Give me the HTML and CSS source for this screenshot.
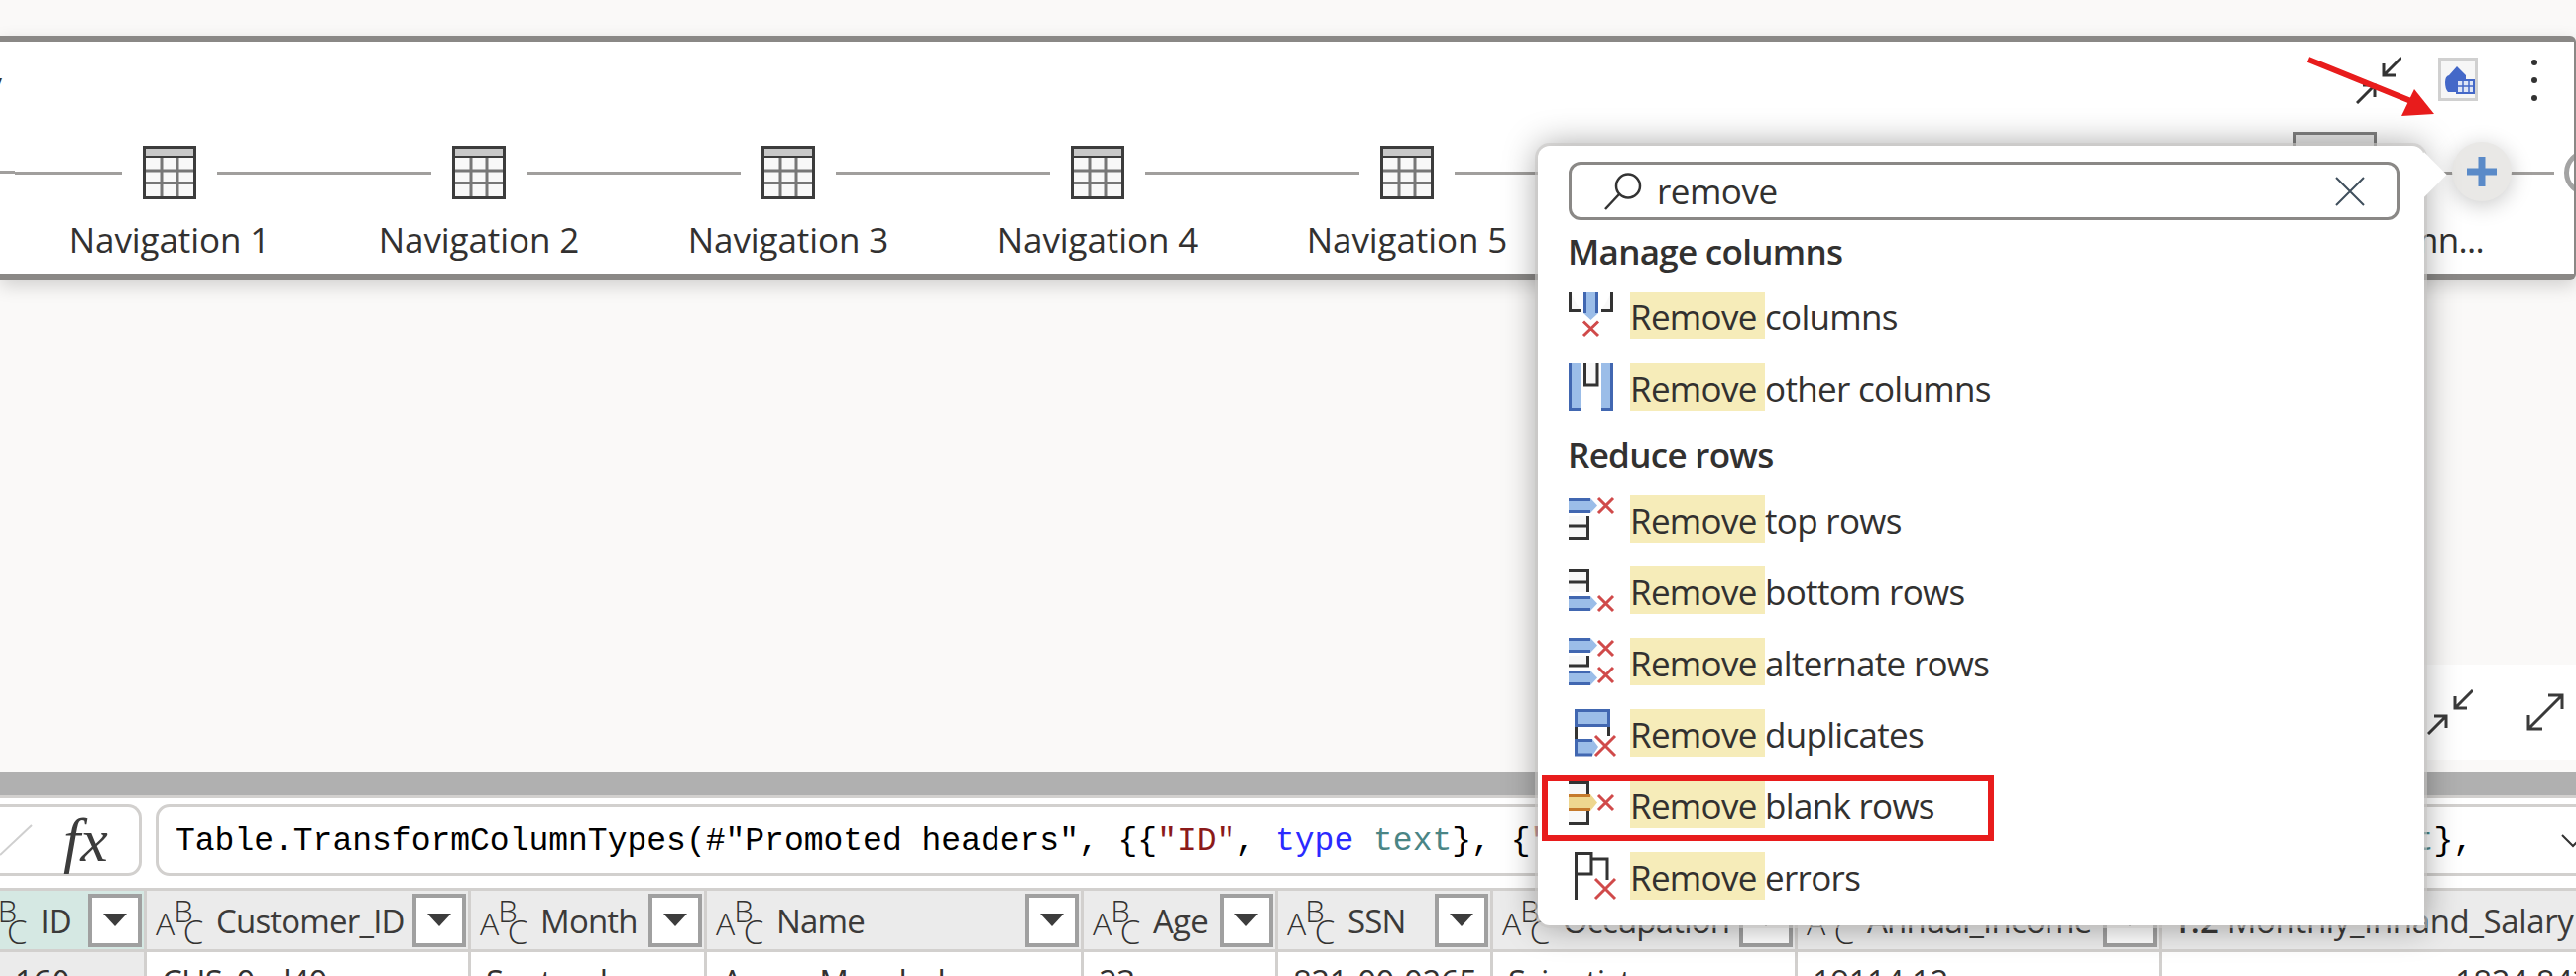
FILE: index.html
```html
<!DOCTYPE html>
<html lang="en">
<head>
    <meta charset="UTF-8">
    <title>Power Query - Add step</title>
    <link rel="stylesheet" href="styles.css">
</head>
<body>
    <div class="top-gap"></div>

    <section class="diagram">
        <div class="diagram-head">
            <div class="diagram-title">Query</div>
            <div class="diagram-tools">
                <svg class="tool-collapse" width="46" height="48" viewBox="0 0 46 48" fill="none" stroke="#333" stroke-width="3">
                    <path d="M46 1 L28 19 M28 7 V19 H40 M1 47 L19 29 M7 29 H19 V41"/>
                </svg>
                <svg class="tool-home" width="40" height="46" viewBox="0 0 40 46">
                    <rect x="1.5" y="2.5" width="37" height="41" fill="#f6f6f6" stroke="#d0d0d0" stroke-width="3"/>
                    <path d="M7 26 Q7 20 11 19 L19 10 L28 19 V36 H10 Q7 33 7 26 Z" fill="#4468c8"/>
                    <rect x="19" y="24" width="17" height="13" fill="#dfe6f6" stroke="#4468c8" stroke-width="2"/>
                    <path d="M19 30 H36 M25 24 V37 M31 24 V37" stroke="#4468c8" stroke-width="1.5"/>
                </svg>
                <div class="tool-dots"><span></span><span></span><span></span></div>
            </div>
        </div>

        <div class="steps">
            <div class="step-lead"></div>
            <div class="step">
                <div class="step-row"><i></i><svg class="table-icon" viewBox="0 0 54 54"><use href="#table"/></svg><i></i></div>
                <div class="step-label">Navigation 1</div>
            </div>
            <div class="step">
                <div class="step-row"><i></i><svg class="table-icon" viewBox="0 0 54 54"><use href="#table"/></svg><i></i></div>
                <div class="step-label">Navigation 2</div>
            </div>
            <div class="step">
                <div class="step-row"><i></i><svg class="table-icon" viewBox="0 0 54 54"><use href="#table"/></svg><i></i></div>
                <div class="step-label">Navigation 3</div>
            </div>
            <div class="step">
                <div class="step-row"><i></i><svg class="table-icon" viewBox="0 0 54 54"><use href="#table"/></svg><i></i></div>
                <div class="step-label">Navigation 4</div>
            </div>
            <div class="step">
                <div class="step-row"><i></i><svg class="table-icon" viewBox="0 0 54 54"><use href="#table"/></svg><i></i></div>
                <div class="step-label">Navigation 5</div>
            </div>
            <div class="step">
                <div class="step-row"><i></i><svg class="table-icon" viewBox="0 0 54 54"><use href="#table"/></svg><i></i></div>
                <div class="step-label">Navigation 6</div>
            </div>
            <div class="step">
                <div class="step-row"><i></i><svg class="table-icon" viewBox="0 0 54 54"><use href="#table"/></svg><i></i></div>
                <div class="step-label">Navigation 7</div>
            </div>
            <div class="step">
                <div class="step-row"><i></i><div class="step-selected"></div><i></i></div>
                <div class="step-label step-label-long">Removed column...</div>
            </div>
            <div class="step-tail">
                <div class="step-row"><i></i><div class="step-ring"></div></div>
            </div>
        </div>

        <div class="add-step">
            <svg width="30" height="30" viewBox="0 0 30 30"><path d="M15 0 V30 M0 15 H30" stroke="#5a8ac8" stroke-width="7"/></svg>
        </div>
    </section>

    <div class="canvas">
        <div class="zoom-panel">
            <svg class="zoom-collapse" width="46" height="46" viewBox="0 0 46 46" fill="none" stroke="#3a3a3a" stroke-width="3">
                <path d="M46 1 L28 19 M28 7 V19 H40 M1 45 L19 27 M7 27 H19 V39"/>
            </svg>
            <svg class="zoom-expand" width="38" height="38" viewBox="0 0 38 38" fill="none" stroke="#3a3a3a" stroke-width="3">
                <path d="M2 36 L36 2 M22 2 H36 V16 M2 22 V36 H16"/>
            </svg>
        </div>
    </div>

    <div class="splitter"></div>

    <div class="formula-bar">
        <div class="fx-box">
            <svg width="34" height="32" viewBox="0 0 34 32"><path d="M0 31 L32 1" stroke="#cfcfcf" stroke-width="2"/></svg>
            <span class="fx">fx</span>
        </div>
        <div class="formula-box">
            <div class="formula-text">Table.TransformColumnTypes(#"Promoted headers", {{<span class="str">"ID"</span>, <span class="kw">type</span> <span class="ty">text</span>}, {<span class="str">"Customer_ID"</span>, <span class="kw">type</span> <span class="ty">text</span>}, {<span class="str">"Month"</span>, <span class="kw">type</span> <span class="ty">text</span>},</div>
            <svg class="formula-chevron" width="24" height="14" viewBox="0 0 24 14"><path d="M1 1 L12 12 L23 1" fill="none" stroke="#333" stroke-width="2"/></svg>
        </div>
    </div>

    <div class="grid">
        <div class="grid-head">
            <div class="col col-id head-cell active">
                <span class="abc">A<b>B</b><em>C</em></span><span class="col-name">ID</span>
                <span class="filter"></span>
            </div>
            <div class="col col-customer head-cell">
                <span class="abc">A<b>B</b><em>C</em></span><span class="col-name">Customer_ID</span>
                <span class="filter"></span>
            </div>
            <div class="col col-month head-cell">
                <span class="abc">A<b>B</b><em>C</em></span><span class="col-name">Month</span>
                <span class="filter"></span>
            </div>
            <div class="col col-name-w head-cell">
                <span class="abc">A<b>B</b><em>C</em></span><span class="col-name">Name</span>
                <span class="filter"></span>
            </div>
            <div class="col col-age head-cell">
                <span class="abc">A<b>B</b><em>C</em></span><span class="col-name">Age</span>
                <span class="filter"></span>
            </div>
            <div class="col col-ssn head-cell">
                <span class="abc">A<b>B</b><em>C</em></span><span class="col-name">SSN</span>
                <span class="filter"></span>
            </div>
            <div class="col col-job head-cell">
                <span class="abc">A<b>B</b><em>C</em></span><span class="col-name">Occupation</span>
                <span class="filter"></span>
            </div>
            <div class="col col-income head-cell">
                <span class="abc">A<b>B</b><em>C</em></span><span class="col-name">Annual_Income</span>
                <span class="filter"></span>
            </div>
            <div class="col col-salary head-cell">
                <span class="num-type">1.2</span><span class="col-name col-name-wide">Monthly_Inhand_Salary</span>
            </div>
        </div>
        <div class="grid-row">
            <div class="col col-id cell row-head">160</div>
            <div class="col col-customer cell">CUS_0xd40</div>
            <div class="col col-month cell">September</div>
            <div class="col col-name-w cell">Aaron Maashoh</div>
            <div class="col col-age cell">23</div>
            <div class="col col-ssn cell">821-00-0265</div>
            <div class="col col-job cell">Scientist</div>
            <div class="col col-income cell">19114.12</div>
            <div class="col col-salary cell cell-salary">1824.843</div>
        </div>
    </div>

    <!-- add step popup -->
    <div class="popup">
        <span class="popup-beak"></span>
        <div class="search">
            <svg class="search-icon" width="38" height="38" viewBox="0 0 38 38" fill="none" stroke="#333" stroke-width="2.5">
                <circle cx="24" cy="13.5" r="12"/>
                <path d="M15 22 L1 37"/>
            </svg>
            <span class="search-text">remove</span>
            <svg class="search-clear" width="30" height="30" viewBox="0 0 30 30"><path d="M1 1 L29 29 M29 1 L1 29" stroke="#3f4f5c" stroke-width="2"/></svg>
        </div>

        <h3 class="group-title">Manage columns</h3>
        <div class="menu">
            <div class="menu-item">
                <svg class="item-icon" viewBox="0 0 45 48">
                    <path d="M1.5 0 V19.5 H12 M43.5 0 V19.5 H33" fill="#f8f8f8" stroke="#333" stroke-width="3"/>
                    <path d="M15 0 H30 V22 L22.5 29 L15 22 Z" fill="#9bbde8"/>
                    <path d="M16.5 0 V22 M28.5 0 V22" stroke="#4167b1" stroke-width="3"/>
                    <path d="M15 30.5 L30 45 M30 30.5 L15 45" stroke="#d04a4a" stroke-width="3"/>
                </svg>
                <span class="item-text"><mark>Remove </mark>columns</span>
            </div>
            <div class="menu-item">
                <svg class="item-icon" viewBox="0 0 45 48">
                    <path d="M0 0 H12 V48 H0 Z M33 0 H45 V48 H33 Z" fill="#9bbde8"/>
                    <path d="M1.5 0 V46.5 H12 M43.5 0 V46.5 H33" fill="none" stroke="#4167b1" stroke-width="3"/>
                    <path d="M16.5 0 V22 H29 V0" fill="#f8f8f8" stroke="#333" stroke-width="3"/>
                </svg>
                <span class="item-text"><mark>Remove </mark>other columns</span>
            </div>
        </div>

        <h3 class="group-title group-second">Reduce rows</h3>
        <div class="menu">
            <div class="menu-item">
                <svg class="item-icon" viewBox="0 0 45 48">
                    <path d="M0 3 H22 L29 10.5 L22 18 H0 Z" fill="#9bbde8"/>
                    <path d="M0 4.5 H22 M0 16.5 H22" stroke="#4167b1" stroke-width="3"/>
                    <path d="M30 3 L45 18 M45 3 L30 18" stroke="#d04a4a" stroke-width="3"/>
                    <path d="M0 21 H19.5 V43.5 H0 Z" fill="#f8f8f8"/>
                    <path d="M19.5 21 V43.5 H0 M0 31 H19.5" fill="none" stroke="#333" stroke-width="3"/>
                </svg>
                <span class="item-text"><mark>Remove </mark>top rows</span>
            </div>
            <div class="menu-item">
                <svg class="item-icon" viewBox="0 0 45 48">
                    <path d="M0 4.5 H19.5 V26 H0 Z" fill="#f8f8f8"/>
                    <path d="M0 4.5 H19.5 V26 M0 16 H19.5" fill="none" stroke="#333" stroke-width="3"/>
                    <path d="M0 30 H22 L29 37.5 L22 45 H0 Z" fill="#9bbde8"/>
                    <path d="M0 31.5 H22 M0 43.5 H22" stroke="#4167b1" stroke-width="3"/>
                    <path d="M30 30 L45 45 M45 30 L30 45" stroke="#d04a4a" stroke-width="3"/>
                </svg>
                <span class="item-text"><mark>Remove </mark>bottom rows</span>
            </div>
            <div class="menu-item">
                <svg class="item-icon" viewBox="0 0 45 48">
                    <path d="M0 0 H22 L29 7.5 L22 15 H0 Z" fill="#9bbde8"/>
                    <path d="M0 1.5 H22 M0 13.5 H22" stroke="#4167b1" stroke-width="3"/>
                    <path d="M30 3 L45 18 M45 3 L30 18" stroke="#d04a4a" stroke-width="3"/>
                    <path d="M0 18 H19.5 V29 H0 Z" fill="#f8f8f8"/>
                    <path d="M19.5 18 V28 H0" fill="none" stroke="#333" stroke-width="3"/>
                    <path d="M0 33 H22 L29 40.5 L22 48 H0 Z" fill="#9bbde8"/>
                    <path d="M0 34.5 H22 M0 46.5 H22" stroke="#4167b1" stroke-width="3"/>
                    <path d="M30 30 L45 45 M45 30 L30 45" stroke="#d04a4a" stroke-width="3"/>
                </svg>
                <span class="item-text"><mark>Remove </mark>alternate rows</span>
            </div>
            <div class="menu-item">
                <svg class="item-icon" viewBox="0 0 45 48">
                    <rect x="7.5" y="1.5" width="33" height="15" fill="#9bbde8" stroke="#4167b1" stroke-width="3"/>
                    <path d="M7.5 18 V30 M40.5 18 V27" stroke="#333" stroke-width="3"/>
                    <path d="M6 30 H24 L30 38 L24 47 H6 Z" fill="#9bbde8"/>
                    <path d="M7.5 30 V46 H24 M6 31.5 H24" fill="none" stroke="#4167b1" stroke-width="3"/>
                    <path d="M27 27 L47 47 M47 27 L27 47" stroke="#d04a4a" stroke-width="3"/>
                </svg>
                <span class="item-text"><mark>Remove </mark>duplicates</span>
            </div>
            <div class="menu-item highlighted">
                <svg class="item-icon" viewBox="0 0 45 48">
                    <path d="M0 1.5 H19.5 V14 H0 Z M0 31 H19.5 V43.5 H0 Z" fill="#f8f8f8"/>
                    <path d="M0 1.5 H19.5 V14 M19.5 31 V43.5 H0" fill="none" stroke="#333" stroke-width="3"/>
                    <path d="M0 14 H22 L29 22.5 L22 31 H0 Z" fill="#eed78f"/>
                    <path d="M0 15.5 H22 M0 29.5 H22" stroke="#c57a2c" stroke-width="3"/>
                    <path d="M30 15 L45 30 M45 15 L30 30" stroke="#d04a4a" stroke-width="3"/>
                </svg>
                <span class="item-text"><mark>Remove </mark>blank rows</span>
                <span class="red-box"></span>
            </div>
            <div class="menu-item">
                <svg class="item-icon" viewBox="0 0 45 48">
                    <path d="M7.5 48 V1.5 H23 V22 H7.5 M23 7 H39 V28" fill="none" stroke="#333" stroke-width="3"/>
                    <path d="M27 27 L47 47 M47 27 L27 47" stroke="#d04a4a" stroke-width="3"/>
                </svg>
                <span class="item-text"><mark>Remove </mark>errors</span>
            </div>
        </div>
    </div>

    <!-- red arrow drawn on the screenshot -->
    <svg class="red-arrow" width="130" height="62" viewBox="0 0 130 62">
        <path d="M1 3 L112 48" stroke="#e81c1c" stroke-width="6"/>
        <path d="M108 33 L95 60 L128 58 Z" fill="#e81c1c"/>
    </svg>

    <svg class="defs" width="0" height="0">
        <symbol id="table" viewBox="0 0 54 54">
            <rect width="54" height="54" fill="#3c3c3c"/>
            <rect x="3" y="3" width="48" height="7" fill="#c8c8c8"/>
            <rect x="3" y="12" width="48" height="39" fill="#f8f8f8"/>
            <path d="M19 12 V51 M35 12 V51 M3 25 H51 M3 37.5 H51" stroke="#777" stroke-width="3"/>
        </symbol>
    </svg>
</body>
</html>
```

FILE: styles.css
```css
* {
    box-sizing: border-box;
}
html, body {
    margin: 0;
    height: 984px;
}
body {
    width: 2598px;
    overflow: hidden;
    position: relative;
    background-color: #faf9f8;
    color: #323130;
    font-family: 'Open Sans', 'Noto Sans', sans-serif;
    font-size: 35px;
}
.top-gap {
    height: 36px;
}

/* diagram */
.diagram {
    position: relative;
    height: 246px;
    background-color: #ffffff;
    border-top: 6px solid #8a8886;
    border-bottom: 6px solid #8a8886;
    border-right: 2px solid #8a8886;
    border-radius: 0 6px 6px 0;
    box-shadow: 0 6px 18px rgba(0, 0, 0, 0.16);
    overflow: hidden;
}
.diagram-head {
    height: 105px;
    padding: 15px 0 0 0;
    display: flex;
    justify-content: space-between;
}
.diagram-title {
    margin: 8px 0 0 -99px;
    font-weight: 600;
    font-size: 34px;
    line-height: 40px;
}
.diagram-tools {
    display: flex;
    align-items: flex-start;
}
.tool-home {
    margin-left: 37px;
    filter: blur(0.7px);
}
.tool-dots {
    margin: 3px 37px 0 54px;
    display: flex;
    flex-direction: column;
    gap: 12px;
}
.tool-dots span {
    width: 6px;
    height: 6px;
    border-radius: 50%;
    background-color: #333;
}
.steps {
    display: flex;
}
.step-lead {
    width: 15px;
    height: 28px;
    border-bottom: 3px solid #a19f9d;
    margin-bottom: auto;
}
.step {
    width: 312px;
    flex: none;
    display: flex;
    flex-direction: column;
    align-items: center;
}
.step-tail {
    flex: 1;
}
.step-row {
    width: 100%;
    height: 54px;
    display: flex;
    align-items: center;
    gap: 21px;
}
.step-row i {
    flex: 1;
    height: 3px;
    background-color: #a19f9d;
}
.table-icon {
    width: 54px;
    height: 54px;
    flex: none;
}
.step-selected {
    width: 84px;
    height: 82px;
    flex: none;
    border: 3px solid #808080;
    background-color: #e8e8e8;
}
.step-label {
    margin-top: 19px;
    line-height: 44px;
    white-space: nowrap;
    letter-spacing: -0.1px;
}
.step-label-long {
    letter-spacing: -0.7px;
}
.step-tail .step-row {
    gap: 10px;
}
.step-ring {
    width: 46px;
    height: 46px;
    flex: none;
    margin-right: -36px;
    border: 5px solid #a3a3a3;
    border-radius: 50%;
}
.add-step {
    position: absolute;
    left: 2473px;
    top: 101px;
    width: 60px;
    height: 60px;
    border-radius: 50%;
    background-color: #e9e8e6;
    box-shadow: 0 4px 22px rgba(0, 0, 0, 0.22);
    display: flex;
    align-items: center;
    justify-content: center;
}

/* empty canvas */
.canvas {
    height: 496px;
    display: flex;
    justify-content: flex-end;
    align-items: flex-end;
}
.zoom-panel {
    width: 218px;
    height: 96px;
    margin-bottom: 12px;
    background-color: #ffffff;
    display: flex;
    align-items: center;
}
.zoom-collapse {
    margin-left: 68px;
}
.zoom-expand {
    margin-left: 54px;
}
.splitter {
    height: 27px;
    background-color: #b0b0b0;
    border-bottom: 3px solid #d2d0ce;
}

/* formula bar */
.formula-bar {
    height: 90px;
    padding-top: 6px;
    background-color: #ffffff;
    display: flex;
    gap: 14px;
}
.fx-box {
    width: 143px;
    height: 72px;
    border: 3px solid #d2d0ce;
    border-left: none;
    border-radius: 0 14px 14px 0;
    display: flex;
    align-items: center;
    gap: 30px;
}
.fx {
    font-family: 'Liberation Serif', serif;
    font-style: italic;
    font-size: 62px;
    line-height: 1;
    color: #3c3c3c;
}
.formula-box {
    flex: 1;
    min-width: 0;
    height: 72px;
    margin-right: -22px;
    padding: 2px 10px 0 17px;
    border: 3px solid #d2d0ce;
    border-radius: 14px;
    display: flex;
    align-items: center;
    justify-content: space-between;
}
.formula-text {
    font-family: 'Liberation Mono', monospace;
    font-size: 33px;
    color: #000000;
    white-space: pre;
}
.str {
    color: #8b1a1a;
}
.kw {
    color: #2a2aff;
}
.ty {
    color: #4a8585;
}

/* data grid */
.grid {
    background-color: #ffffff;
}
.grid-head {
    height: 65px;
    background-color: #ebebeb;
    border-top: 3px solid #d2d0ce;
    border-bottom: 3px solid #d2d0ce;
    display: flex;
}
.grid-row {
    display: flex;
}
.col {
    flex: none;
    border-right: 3px solid #d2d0ce;
}
.col-id { width: 148px; }
.col-customer { width: 327px; }
.col-month { width: 238px; }
.col-name-w { width: 380px; }
.col-age { width: 196px; }
.col-ssn { width: 217px; }
.col-job { width: 307px; }
.col-income { width: 367px; }
.col-salary { width: 418px; border-right: none; }
.head-cell {
    height: 59px;
    padding: 0 2px 0 9px;
    display: flex;
    align-items: center;
    white-space: nowrap;
}
.head-cell.active {
    background-color: #d5e8e3;
    padding-left: 0;
    justify-content: flex-end;
}
.abc {
    flex: none;
    width: 44px;
    margin-top: 6px;
    font-weight: 300;
    font-size: 32px;
    line-height: 40px;
    letter-spacing: -1px;
    white-space: nowrap;
    color: #323130;
}
.abc b {
    font-weight: 300;
    font-size: 31px;
    line-height: 0;
    vertical-align: 13px;
}
.abc em {
    font-style: normal;
    font-size: 33px;
    line-height: 0;
    vertical-align: -9px;
    margin-left: -9px;
}
.active .abc {
    margin-left: -30px;
}
.col-name {
    margin: 2px 0 0 17px;
    font-size: 33px;
    font-weight: 500;
    letter-spacing: -0.8px;
    color: #3b3a39;
}
.col-name-wide {
    margin-left: 8px;
    letter-spacing: -0.35px;
}
.num-type {
    margin: 2px 0 0 2px;
    font-size: 33px;
    font-weight: 600;
    color: #3b3a39;
}
.filter {
    flex: none;
    position: relative;
    width: 54px;
    height: 54px;
    margin-left: auto;
    background-color: #ffffff;
    border: 4px solid #a0a0a0;
}
.active .filter {
    margin-left: 17px;
}
.filter::after {
    content: '';
    position: absolute;
    left: 11px;
    top: 16px;
    border-left: 12px solid transparent;
    border-right: 12px solid transparent;
    border-top: 13px solid #3c3c3c;
}
.cell {
    height: 60px;
    padding: 8px 0 0 15px;
    white-space: nowrap;
    line-height: 44px;
    font-size: 33px;
    letter-spacing: -0.5px;
}
.row-head {
    background-color: #ebebeb;
}
.cell-salary {
    padding-left: 296px;
}

/* add step popup */
.popup {
    position: absolute;
    left: 1551px;
    top: 147px;
    width: 894px;
    height: 786px;
    padding: 16px 25px 0 31px;
    background-color: #ffffff;
    border-radius: 12px 12px 0 12px;
    box-shadow: 0 0 0 3px rgba(200, 198, 196, 0.6), 0 0 34px rgba(0, 0, 0, 0.38);
}
.popup-beak {
    position: absolute;
    right: -16px;
    top: 13px;
    width: 32px;
    height: 32px;
    background-color: #ffffff;
    transform: rotate(45deg);
}
.search {
    position: relative;
    height: 59px;
    padding: 0 22px 0 33px;
    border: 3px solid #8a8886;
    border-radius: 12px;
    display: flex;
    align-items: center;
}
.search-text {
    margin-left: 15px;
    letter-spacing: -0.5px;
}
.search-clear {
    margin-left: auto;
    margin-right: 10px;
}
.group-title {
    margin: 0 0 9px -1px;
    height: 63px;
    line-height: 63px;
    font-size: 35px;
    font-weight: 600;
    letter-spacing: -0.7px;
}
.group-second {
    margin-top: 13px;
}
.menu {
    display: flex;
    flex-direction: column;
    gap: 24px;
}
.menu-item {
    position: relative;
    height: 48px;
    display: flex;
    align-items: center;
}
.item-icon {
    width: 45px;
    height: 48px;
    flex: none;
    margin-right: 17px;
    overflow: visible;
}
.item-text {
    display: block;
    height: 48px;
    line-height: 52px;
    white-space: nowrap;
    letter-spacing: -0.7px;
}
mark {
    display: inline-block;
    height: 48px;
    line-height: 52px;
    background-color: #f6ecb9;
    color: inherit;
    white-space: pre;
}
.red-box {
    position: absolute;
    left: -27px;
    top: -6px;
    width: 456px;
    height: 67px;
    border: 6px solid #e81c1c;
}

/* annotation */
.red-arrow {
    position: absolute;
    left: 2327px;
    top: 57px;
}
.defs {
    position: absolute;
}
```
